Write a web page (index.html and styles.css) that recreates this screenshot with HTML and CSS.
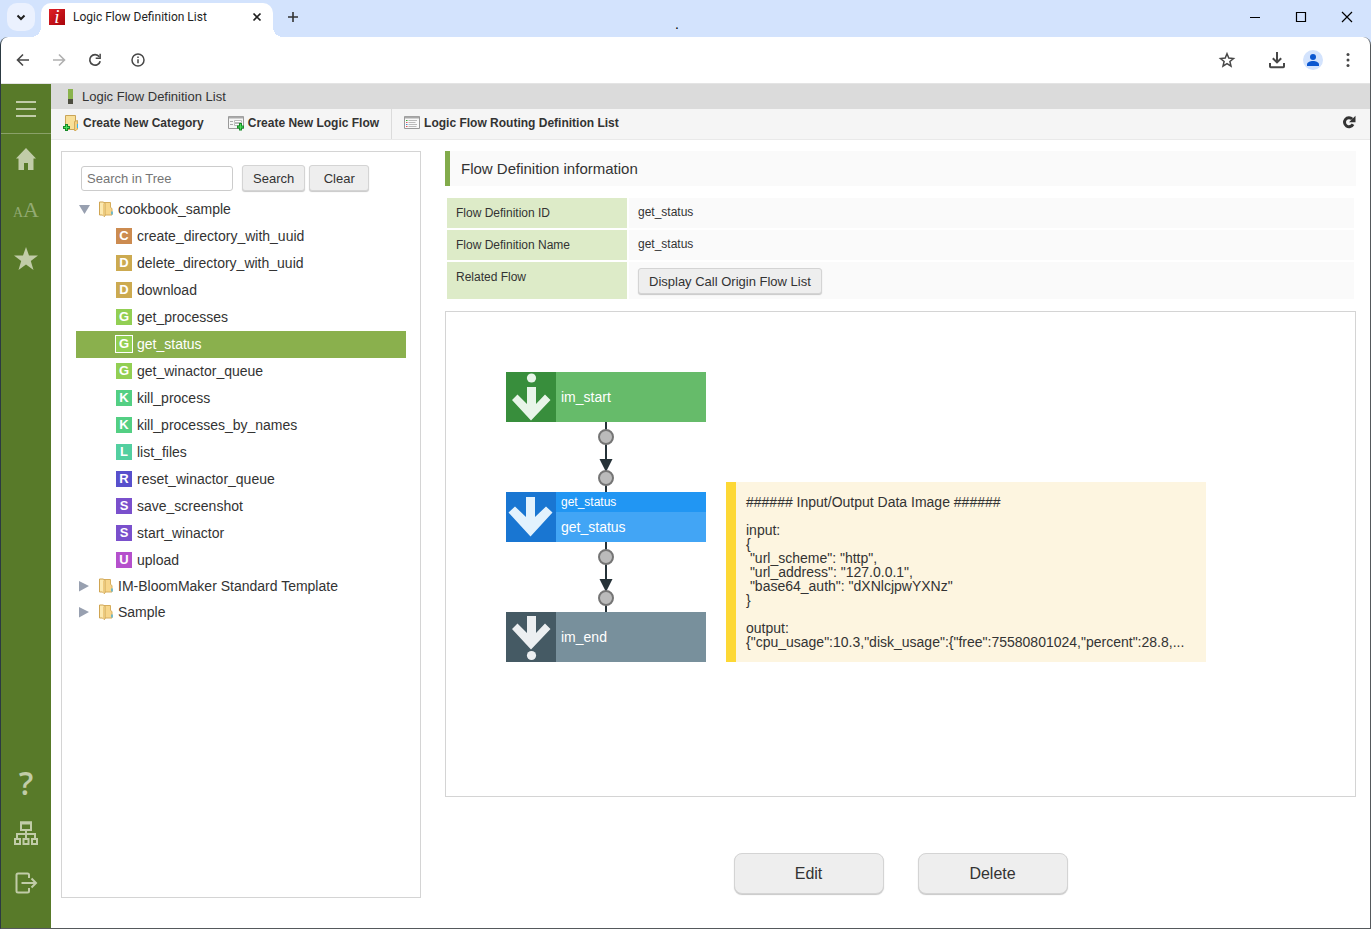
FILE: index.html
```html
<!DOCTYPE html>
<html lang="en">
<head>
    <meta charset="UTF-8">
    <meta name="viewport" content="width=device-width, initial-scale=1.0">
    <title>Logic Flow Definition List</title>
    <link rel="stylesheet" href="styles.css">
</head>
<body>
    <!-- Browser tabs -->
    <div class="tab-strip">
        <button class="tab-search" aria-label="Search tabs">
            <svg width="28" height="28" viewBox="0 0 28 28"><path d="M10.500 12.500l3.500 3.500 3.500-3.500" fill="none" stroke="#1f1f1f" stroke-width="2"/></svg>
        </button>
        <div class="tab">
            <span class="favicon">i</span>
            <span class="tab-title">Logic Flow Definition List</span>
            <button class="tab-close" aria-label="Close tab">
                <svg width="16" height="16" viewBox="0 0 16 16"><path d="M4.500 4.500l7 7M11.500 4.500l-7 7" stroke="#1f1f1f" stroke-width="1.700"/></svg>
            </button>
        </div>
        <button class="new-tab" aria-label="New tab">
            <svg width="16" height="16" viewBox="0 0 16 16"><path d="M8 3v10M3 8h10" stroke="#333" stroke-width="1.600"/></svg>
        </button>
        <span class="strip-dot">.</span>
        <div class="window-controls">
            <button aria-label="Minimize"><svg width="12" height="12" viewBox="0 0 12 12"><path d="M1 6.500h10" stroke="#000"/></svg></button>
            <button aria-label="Maximize"><svg width="12" height="12" viewBox="0 0 12 12"><path d="M1.500 1.500h9v9h-9z" fill="none" stroke="#000" stroke-width="1.200"/></svg></button>
            <button aria-label="Close"><svg width="12" height="12" viewBox="0 0 12 12"><path d="M1 1l10 10M11 1L1 11" stroke="#000" stroke-width="1.200"/></svg></button>
        </div>
    </div>

    <div class="window">
        <!-- Browser toolbar -->
        <div class="browser-bar">
            <button aria-label="Back"><svg width="16" height="16" viewBox="0 0 16 16"><path d="M14 8H3M8 2.500L2.500 8 8 13.500" fill="none" stroke="#474747" stroke-width="1.600"/></svg></button>
            <button aria-label="Forward"><svg width="16" height="16" viewBox="0 0 16 16"><path d="M2 8h11M8 2.500l5.500 5.500L8 13.500" fill="none" stroke="#b0b0b0" stroke-width="1.600"/></svg></button>
            <button aria-label="Reload"><svg width="16" height="16" viewBox="0 0 16 16"><path d="M12.300 4.700A5.300 5.300 0 1 0 13.200 9.200" fill="none" stroke="#474747" stroke-width="1.700"/><path d="M13.900 1.800v5.200H8.700V5.500h3.700V1.800z" fill="#474747"/></svg></button>
            <button class="site-info" aria-label="View site information"><svg width="16" height="16" viewBox="0 0 16 16"><circle cx="8" cy="8" r="6" fill="none" stroke="#474747" stroke-width="1.500"/><path d="M8 7.200v4M8 4.600v1.400" stroke="#474747" stroke-width="1.500"/></svg></button>
            <button aria-label="Bookmark"><svg width="18" height="18" viewBox="0 0 18 18"><path d="M9 2.800l1.800 4.300 4.700.4-3.600 3 1.100 4.600L9 12.700l-4 2.400 1.100-4.600-3.600-3 4.700-.4z" fill="none" stroke="#474747" stroke-width="1.500"/></svg></button>
            <button class="download" aria-label="Downloads"><svg width="18" height="18" viewBox="0 0 18 18"><path d="M9 1v10M4.800 7.200L9 11.400l4.200-4.200M2 12v3.500q0 .7.700.7h12.600q.7 0 .7-.7V12" fill="none" stroke="#474747" stroke-width="2"/></svg></button>
            <button class="profile" aria-label="Profile"><svg width="20" height="20" viewBox="0 0 20 20"><circle cx="10" cy="10" r="10" fill="#d3e3fd"/><circle cx="10" cy="7" r="3" fill="#0b57d0"/><path d="M4 16v-1.500C4 12.300 7 11 10 11s6 1.300 6 3.500V16z" fill="#0b57d0"/></svg></button>
            <button class="browser-menu" aria-label="Menu"><svg width="16" height="16" viewBox="0 0 16 16" fill="#474747"><circle cx="8" cy="2.500" r="1.500"/><circle cx="8" cy="8" r="1.500"/><circle cx="8" cy="13.500" r="1.500"/></svg></button>
        </div>

        <div class="app">
            <nav class="side-nav">
                <a href="#" class="nav-menu" aria-label="Menu"><svg width="20" height="16" viewBox="0 0 20 16"><path d="M0 1h20M0 8h20M0 15h20" stroke="#c1cca8" stroke-width="2"/></svg></a>
                <a href="#" aria-label="Home"><svg width="24" height="24" viewBox="0 0 24 24"><path d="M12 1l10 10.500h-2.500V23H14v-7h-4v7H4.500V11.500H2z" fill="#c1cca8"/></svg></a>
                <a href="#" class="nav-font" aria-label="Font size"><small>A</small>A</a>
                <a href="#" aria-label="Favorites"><svg width="26" height="26" viewBox="0 0 26 26"><path d="M13 1l3 8.500h9l-7.200 5.400 2.700 9L13 18.600 5.500 23.900l2.700-9L1 9.500h9z" fill="#c1cca8"/></svg></a>
                <a href="#" class="nav-help" aria-label="Help">?</a>
                <a href="#" aria-label="Sitemap"><svg width="24" height="24" viewBox="0 0 24 24" fill="none" stroke="#c1cca8" stroke-width="2"><path d="M7 1.500h10V9H7zM12 9v8M3 17v-4h18v4M1 18h5v5H1zM9.500 18h5v5h-5zM18 18h5v5h-5z"/><path d="M6 2h12" stroke-width="3"/></svg></a>
                <a href="#" aria-label="Logout"><svg width="24" height="24" viewBox="0 0 24 24" fill="none" stroke="#c1cca8" stroke-width="2"><path d="M15 7V4q0-1.500-1.500-1.500H4Q2.500 2.500 2.500 4v16q0 1.500 1.500 1.500h9.500Q15 21.500 15 20v-3M7.500 12h14M17.500 7.500L22 12l-4.500 4.500"/></svg></a>
            </nav>

            <div class="page">
                <h1 class="page-title">Logic Flow Definition List</h1>

                <div class="toolbar">
                    <a href="#">
                        <svg width="16" height="16" viewBox="0 0 16 16"><path d="M2.500.5h10v14h-10z" fill="#f8df98" stroke="#c9a457"/><path d="M11.500 6.500l3-1v8.500l-1.500 1.500h-1.500z" fill="#f3d084" stroke="#d3ab58"/><path d="M14.500 9v4" stroke="#36b4ef"/><path d="M3.500 9v7M0 12.500h7" stroke="#188a28" stroke-width="3"/><path d="M3.500 10v5M1 12.500h5" stroke="#4be05c"/></svg>
                        Create New Category
                    </a>
                    <a href="#">
                        <svg width="16" height="16" viewBox="0 0 16 16"><path d="M.5 1.500h15v12H.5z" fill="#f6f6f6" stroke="#999"/><path d="M1 2.500h14" stroke="#aaa" stroke-width="2"/><path d="M2 6.500h3M2 9.500h3" stroke="#aaa"/><path d="M6.500 5.500h7v2h-7zM6.500 8.500h5v2h-5z" fill="#fff" stroke="#bbb"/><path d="M12.500 8v7.500M9 12h7" stroke="#188a28" stroke-width="3"/><path d="M12.500 9v5.500M10 12h5" stroke="#4be05c"/></svg>
                        Create New Logic Flow
                    </a>
                    <a href="#" class="separated">
                        <svg width="16" height="16" viewBox="0 0 16 16"><path d="M.5 1.500h15v12H.5z" fill="#fafafa" stroke="#999"/><path d="M1 2.500h14" stroke="#aaa" stroke-width="2"/><path d="M4.500 5.500H13M4.500 7.500h7M4.500 9.500H13M4.500 11.500h8" stroke="#bbb"/><path d="M2 5.500h1.500" stroke="#3a3"/><path d="M2 7.500h1.500M2 11.500h1.500" stroke="#d55"/><path d="M2 9.500h1.500" stroke="#48c"/></svg>
                        Logic Flow Routing Definition List
                    </a>
                    <button class="refresh" aria-label="Refresh"><svg width="14" height="14" viewBox="0 0 14 14"><path d="M11 9.300A4.500 4.500 0 1 1 10.200 4" fill="none" stroke="#333" stroke-width="3"/><path d="M13.500.8v6.400H7z" fill="#333"/></svg></button>
                </div>

                <div class="content">
                    <section class="tree-panel">
                        <form class="tree-search">
                            <input type="text" placeholder="Search in Tree" aria-label="Search in Tree">
                            <button type="button" class="btn">Search</button>
                            <button type="button" class="btn">Clear</button>
                        </form>
                        <ul class="tree" id="tree"></ul>
                    </section>

                    <main class="detail">
                        <h2>Flow Definition information</h2>
                        <table class="info">
                            <tr><th scope="row">Flow Definition ID</th><td>get_status</td></tr>
                            <tr><th scope="row">Flow Definition Name</th><td>get_status</td></tr>
                            <tr><th scope="row">Related Flow</th><td class="has-btn"><button class="btn">Display Call Origin Flow List</button></td></tr>
                        </table>

                        <!-- Flow diagram -->
                        <div class="canvas">
                            <svg class="link link-1" width="18" height="70" viewBox="0 0 18 70"><path d="M9 0v70" stroke="#263238" stroke-width="2"/><path d="M2.500 37h13L9 50z" fill="#263238"/><circle cx="9" cy="15" r="7" fill="#bbb" stroke="#757575" stroke-width="2"/><circle cx="9" cy="56" r="7" fill="#bbb" stroke="#757575" stroke-width="2"/></svg>
                            <svg class="link link-2" width="18" height="70" viewBox="0 0 18 70"><path d="M9 0v70" stroke="#263238" stroke-width="2"/><path d="M2.500 37h13L9 50z" fill="#263238"/><circle cx="9" cy="15" r="7" fill="#bbb" stroke="#757575" stroke-width="2"/><circle cx="9" cy="56" r="7" fill="#bbb" stroke="#757575" stroke-width="2"/></svg>

                            <div class="node node-start">
                                <svg width="50" height="50" viewBox="0 0 50 50" fill="#e8f5e9"><circle cx="25.500" cy="6" r="4.600"/><path d="M21 15h9v17l9-9.500 5.500 5.500L25 48.500 6 28l5.500-5.500L21 32z"/></svg>
                                <span class="node-label">im_start</span>
                            </div>
                            <div class="node node-task">
                                <svg width="50" height="50" viewBox="0 0 50 50" fill="#e3f2fd"><path d="M20 5h9v20l11-10.500 6.500 6L24.500 44.500 2.500 20.500l6.500-6L20 25z"/></svg>
                                <div class="node-body">
                                    <span class="node-type">get_status</span>
                                    <span class="node-label">get_status</span>
                                </div>
                            </div>
                            <div class="node node-end">
                                <svg width="50" height="50" viewBox="0 0 50 50" fill="#eceff1"><path d="M21 4h9v17l9-9.500 5.500 5.500L25 37.500 6 17l5.500-5.500L21 21z"/><circle cx="25.500" cy="43.500" r="4.600"/></svg>
                                <span class="node-label">im_end</span>
                            </div>

                            <pre class="note">###### Input/Output Data Image ######

input:
{
 "url_scheme": "http",
 "url_address": "127.0.0.1",
 "base64_auth": "dXNlcjpwYXNz"
}

output:
{"cpu_usage":10.3,"disk_usage":{"free":75580801024,"percent":28.8,...</pre>
                        </div>

                        <div class="actions">
                            <button class="btn btn-large">Edit</button>
                            <button class="btn btn-large">Delete</button>
                        </div>
                    </main>
                </div>
            </div>
        </div>
    </div>

    <script src="tree.js"></script>
</body>
</html>
```
FILE: styles.css
```css
* {
    margin: 0;
    padding: 0;
    box-sizing: border-box;
}

body {
    font-family: "Liberation Sans", Arial, sans-serif;
    font-size: 14px;
    color: #333;
    background: #d3e3fd;
    min-height: 100vh;
    display: flex;
    flex-direction: column;
}

button {
    font-family: inherit;
    color: inherit;
    background: none;
    border: none;
    cursor: pointer;
}

a {
    color: inherit;
    text-decoration: none;
}

svg {
    display: block;
    flex: none;
}

/* Browser tabs */
.tab-strip {
    height: 37px;
    padding-left: 7px;
    display: flex;
}

.tab-search {
    width: 28px;
    height: 28px;
    margin: 3px 6px 0 0;
    border-radius: 10px;
    background: #ebf1fe;
}

.tab {
    position: relative;
    width: 232px;
    margin-top: 3px;
    padding: 0 8px 6px;
    display: flex;
    align-items: center;
    background: #fff;
    border-radius: 10px 10px 0 0;
}

/* flared feet of the active tab */
.tab::before,
.tab::after {
    content: "";
    position: absolute;
    bottom: 0;
    width: 10px;
    height: 10px;
}

.tab::before {
    left: -10px;
    background: radial-gradient(circle at 0 0, transparent 10px, #fff 10px);
}

.tab::after {
    right: -10px;
    background: radial-gradient(circle at 100% 0, transparent 10px, #fff 10px);
}

.favicon {
    width: 16px;
    height: 16px;
    margin-right: 8px;
    background: linear-gradient(135deg, #e02026, #a8050c);
    color: #fff;
    font: italic 19px/15px "Liberation Serif", serif;
    text-align: center;
}

.tab-title {
    flex: 1;
    font: 12px/16px Roboto, sans-serif;
    color: #1f1f1f;
    white-space: nowrap;
}

.new-tab {
    width: 16px;
    height: 34px;
    margin-left: 12px;
}

.strip-dot {
    margin: 16px auto 0 374px;
    color: #000;
    line-height: 16px;
}

.window-controls {
    display: flex;
}

.window-controls button {
    width: 46px;
    padding-left: 16px;
    height: 34px;
}

/* Browser window */
.window {
    flex: 1;
    display: flex;
    flex-direction: column;
    background: #fff;
    border: 1px solid #55595c;
    border-top: none;
    border-left-color: #2c3a42;
    border-radius: 8px 8px 0 0;
}

.browser-bar {
    height: 46px;
    padding: 0 14px;
    display: flex;
    align-items: center;
    gap: 20px;
}

.site-info {
    margin: 0 auto 0 7px;
}

.download {
    margin-left: 12px;
}

.profile,
.browser-menu {
    margin-left: -3px;
}

/* Application */
.app {
    flex: 1;
    display: flex;
    border-top: 1px solid #e4e4e4;
}

.side-nav {
    width: 50px;
    padding-bottom: 20px;
    display: flex;
    flex-direction: column;
    background: #587a29;
    color: #c1cca8;
}

.side-nav a {
    height: 50px;
    display: flex;
    align-items: center;
    justify-content: center;
}

.side-nav .nav-menu {
    border-bottom: 1px solid #8aa169;
}

.side-nav .nav-font {
    align-items: baseline;
    line-height: 52px;
    font-family: "Liberation Serif", serif;
    font-size: 22px;
    color: #93aa73;
}

.nav-font small {
    font-size: 14px;
}

.side-nav .nav-help {
    margin-top: auto;
    font: 600 32px/50px "Open Sans", sans-serif;
}

.page {
    flex: 1;
    min-width: 0;
    display: flex;
    flex-direction: column;
}

.page-title {
    height: 25px;
    padding-left: 17px;
    display: flex;
    align-items: center;
    gap: 9px;
    background: #dbdbdb;
    font-size: 13px;
    font-weight: normal;
}

.page-title::before {
    content: "";
    width: 5px;
    height: 15px;
    background: linear-gradient(#8ab34c 10px, #4d4d40 10px);
}

.toolbar {
    height: 31px;
    display: flex;
    background: #f5f5f5;
    border-bottom: 1px solid #e9e9e9;
}

.toolbar a {
    padding: 0 12px 2px;
    display: flex;
    align-items: center;
    gap: 4px;
    font-size: 12px;
    font-weight: bold;
    white-space: nowrap;
}

.toolbar .separated {
    border-left: 1px solid #dbdbdb;
}

.refresh {
    margin: 0 14px 4px auto;
}

.content {
    flex: 1;
    padding: 11px 14px 30px 10px;
    display: flex;
    gap: 24px;
}

.btn {
    height: 26px;
    padding: 0 10px;
    background: #eee;
    border: 1px solid #d4d4d4;
    border-radius: 3px;
    box-shadow: 0 1px 1px #c8c8c8;
    font-size: 13px;
}

/* Flow tree */
.tree-panel {
    flex: none;
    width: 360px;
    padding: 13px 14px;
    border: 1px solid #d4d4d4;
}

.tree-search {
    display: flex;
    align-items: flex-end;
    gap: 4px;
    padding-left: 5px;
    margin-bottom: 6px;
}

.tree-search input {
    width: 152px;
    height: 25px;
    margin-right: 5px;
    padding: 0 5px;
    border: 1px solid #ccc;
    border-radius: 3px;
    font: 13px "Liberation Sans", Arial, sans-serif;
}

.tree-search input::placeholder {
    color: #757575;
}

.tree-search .btn {
    min-width: 60px;
}

.tree ul,
.tree {
    list-style: none;
}

.tree a {
    height: 27px;
    padding: 0 0 2px 40px;
    display: flex;
    align-items: center;
    gap: 5px;
    white-space: nowrap;
}

.tree .folder {
    height: 26px;
    padding-left: 3px;
}

.folder .arrow {
    margin-right: 3px;
}

.tree .selected {
    background: #8ab04d;
    color: #fff;
}

.badge {
    width: 16px;
    height: 16px;
    color: #fff;
    font-size: 13px;
    font-weight: bold;
    line-height: 16px;
    text-align: center;
}

.selected .badge {
    box-shadow: 0 0 0 1px #fff;
}

/* one colour per initial */
.badge-c { background: #cc8b50; }
.badge-d { background: #ccaa50; }
.badge-g { background: #92cf53; }
.badge-k { background: #53cf83; }
.badge-l { background: #53cfa0; }
.badge-r { background: #5850cc; }
.badge-s { background: #7a50cc; }
.badge-u { background: #b550cc; }

/* Flow details */
.detail {
    flex: 1;
    min-width: 0;
    display: flex;
    flex-direction: column;
}

.detail h2 {
    padding-left: 11px;
    border-left: 5px solid #82ab4b;
    background: #fafafa;
    font-size: 15px;
    font-weight: normal;
    line-height: 35px;
}

.info {
    width: 100%;
    margin: 10px 0;
    border-spacing: 2px;
    font-size: 12px;
    line-height: 14px;
}

.info th,
.info td {
    padding: 8px 9px;
    text-align: left;
    vertical-align: top;
    font-weight: normal;
}

.info th {
    width: 180px;
    background: #ddebc8;
}

.info td {
    padding-top: 7px;
    background: #fafafa;
}

.info .has-btn {
    padding-top: 6px;
    padding-bottom: 5px;
}

.info .btn {
    display: block;
}

.canvas {
    position: relative;
    flex: 1;
    min-height: 420px;
    border: 1px solid #d4d4d4;
    overflow: hidden;
}

.node {
    position: absolute;
    left: 60px;
    width: 200px;
    height: 50px;
    display: flex;
    align-items: center;
    color: #fff;
}

.node-label {
    padding-left: 5px;
}

.node-start {
    top: 60px;
    background: #66bb6a;
}

.node-start svg {
    background: #388e3c;
}

.node-task {
    top: 180px;
    background: #42a5f5;
}

.node-task svg {
    background: #1976d2;
}

.node-end {
    top: 300px;
    background: #78909c;
}

.node-end svg {
    background: #455a64;
}

.node-body {
    flex: 1;
    display: flex;
    flex-direction: column;
    line-height: 30px;
}

.node-type {
    padding-left: 5px;
    background: #2196f3;
    font-size: 12px;
    line-height: 20px;
}

.link {
    position: absolute;
    left: 151px;
}

.link-1 {
    top: 110px;
}

.link-2 {
    top: 230px;
}

.note {
    position: absolute;
    top: 170px;
    left: 280px;
    width: 480px;
    height: 180px;
    padding: 13px 10px;
    border-left: 10px solid #fdd835;
    background: #fdf5e0;
    font: 14px/14px "Liberation Sans", Arial, sans-serif;
}

.actions {
    display: flex;
    justify-content: center;
    gap: 34px;
    margin: 56px 0 4px;
}

.btn-large {
    width: 150px;
    height: 41px;
    border-radius: 8px;
    font-size: 16px;
}
```
FILE: tree.js
```js
const folders = [
    {
        name: 'cookbook_sample',
        open: true,
        flows: [
            'create_directory_with_uuid', 'delete_directory_with_uuid', 'download',
            'get_processes', 'get_status', 'get_winactor_queue', 'kill_process',
            'kill_processes_by_names', 'list_files', 'reset_winactor_queue',
            'save_screenshot', 'start_winactor', 'upload'
        ]
    },
    { name: 'IM-BloomMaker Standard Template', flows: [] },
    { name: 'Sample', flows: [] }
];
const selected = 'get_status';

const folderIcon = `<svg width="14" height="16" viewBox="0 0 14 16">
    <path d="M5 1.500h6.500v5l1.500 1v6.500H5z" fill="#f7d68b" stroke="#d6ad5c"/>
    <path d="M.5 1h3.500l2 1v13l-1 .5-1.500-1.500h-3z" fill="#fce9b0" stroke="#d0a552"/>
    <path d="M4.500 2.500v12" stroke="#efca7c"/><path d="M13 10.500v3" stroke="#4bb3dc" stroke-width="1.500"/></svg>`;

function arrowIcon(open) {
    const d = open ? 'M0 2h11l-5.500 9z' : 'M0 1l10 5-10 5.500z';
    return `<svg class="arrow" width="12" height="12" viewBox="0 0 12 12"><path d="${d}" fill="#98a0b0"/></svg>`;
}

// Build one row for each flow
function flowRow(name) {
    const initial = name[0];
    return `<li><a href="#" class="${name === selected ? 'selected' : ''}">
        <span class="badge badge-${initial}">${initial.toUpperCase()}</span>${name}</a></li>`;
}

document.getElementById('tree').innerHTML = folders.map(folder => `
    <li>
        <a href="#" class="folder">${arrowIcon(folder.open)}${folderIcon}${folder.name}</a>
        <ul>${folder.flows.map(flowRow).join('')}</ul>
    </li>`).join('');
```
